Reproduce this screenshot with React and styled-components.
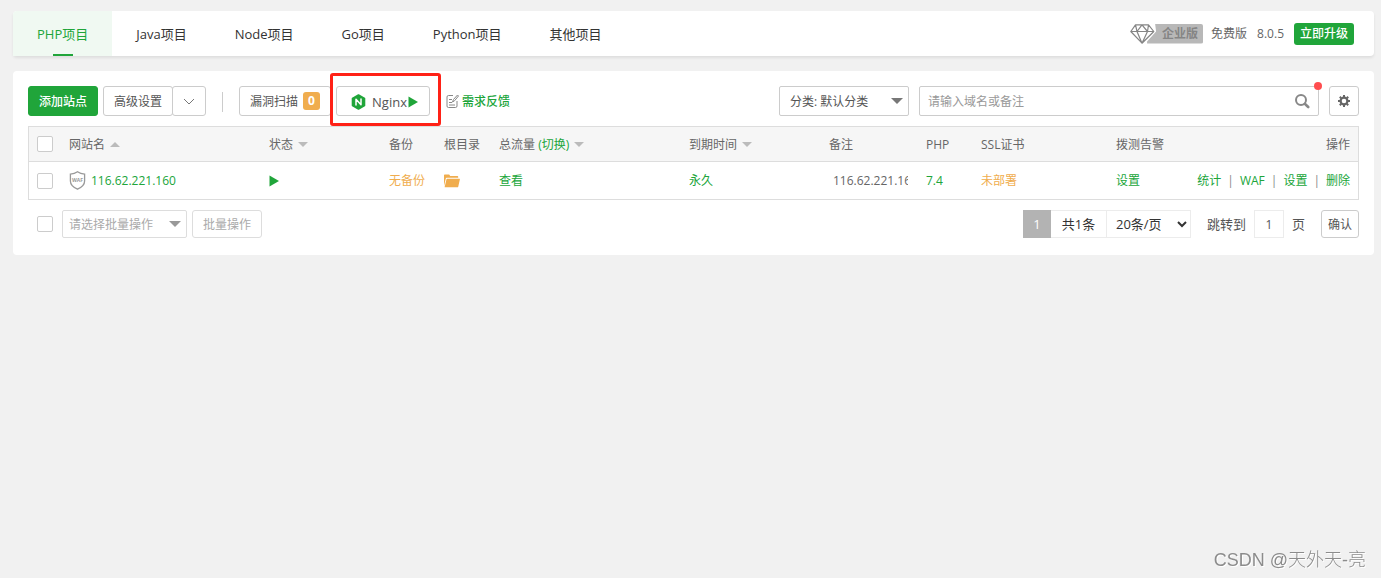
import React from "react";
import styled, { createGlobalStyle, css } from "styled-components";

const GREEN = "#20a53a";
const ORANGE = "#f0ad4e";

const GlobalStyle = createGlobalStyle`
  * {
    box-sizing: border-box;
  }

  body {
    margin: 0;
    background: #f1f1f1;
    color: #666;
    font-family: "Open Sans", "Noto Sans CJK SC", sans-serif;
    font-size: 12px;
    line-height: 19px;
  }

  button,
  input,
  select {
    font: inherit;
  }

  a {
    color: ${GREEN};
    text-decoration: none;
  }
`;

const tabs = [
  { name: "PHP项目", active: true },
  { name: "Java项目" },
  { name: "Node项目" },
  { name: "Go项目" },
  { name: "Python项目" },
  { name: "其他项目" }
];

const columns = [
  { name: "网站名", width: 200, sort: "up" },
  { name: "状态", width: 120, sort: "down" },
  { name: "备份", width: 55 },
  { name: "根目录", width: 55 },
  { name: "总流量", width: 190, sort: "down", toggle: "切换" },
  { name: "到期时间", width: 140, sort: "down" },
  { name: "备注", width: 97 },
  { name: "PHP", width: 55 },
  { name: "SSL证书", width: 135 },
  { name: "拨测告警", width: 80 }
];

const sites = [
  {
    name: "116.62.221.160",
    backup: "无备份",
    expire: "永久",
    remark: "116.62.221.160",
    php: "7.4",
    ssl: "未部署"
  }
];

const actions = ["统计", "WAF", "设置", "删除"];

const Page = styled.div`
  padding: 11px 7px 0 13px;
`;

const Header = styled.header`
  display: flex;
  align-items: center;
  justify-content: space-between;
  height: 45px;
  padding-right: 20px;
  margin-bottom: 15px;
  background: #fff;
  border-radius: 4px;
  box-shadow: 0 2px 3px rgba(0, 0, 0, 0.08);
`;

const Tabs = styled.nav`
  display: flex;
  height: 100%;
`;

const Tab = styled.a`
  position: relative;
  padding: 0 24px;
  border-radius: 4px 0 0 0;
  color: #333;
  font-size: 13px;
  line-height: 46px;

  ${props =>
    props.$active &&
    css`
      background: #f0f9f2;
      color: ${GREEN};

      &::after {
        content: "";
        position: absolute;
        left: 50%;
        bottom: 0;
        width: 20px;
        height: 2px;
        margin-left: -10px;
        background: ${GREEN};
      }
    `};
`;

const Version = styled.div`
  display: flex;
  align-items: center;
  gap: 10px;
`;

const Edition = styled.div`
  display: flex;
  align-items: center;
  margin-right: -2px;
`;

const EditionName = styled.span`
  height: 20px;
  margin-left: -8px;
  padding: 0 5px 0 15px;
  border-radius: 0 2px 2px 0;
  background: #b8b8b8;
  clip-path: polygon(8px 0, 100% 0, 100% 100%, 0 100%, 0 90%, 9px 8px);
  color: #858585;
  font-weight: 700;
  line-height: 20px;
`;

const UpgradeButton = styled.button`
  width: 60px;
  height: 22px;
  padding: 0;
  border: 0;
  border-radius: 3px;
  background: ${GREEN};
  color: #fff;
  font-weight: 500;
`;

const Panel = styled.main`
  padding: 15px 15px 17px;
  background: #fff;
  border-radius: 4px;
`;

const Bar = styled.div`
  display: flex;
  align-items: center;
  justify-content: space-between;
`;

const Group = styled.div`
  display: flex;
  align-items: center;
  gap: ${props => props.$gap || 5}px;
`;

const BatchGroup = styled(Group)`
  padding-left: 9px;
`;

const Button = styled.button`
  display: flex;
  align-items: center;
  justify-content: center;
  width: ${props => props.$width}px;
  height: ${props => props.$height || 30}px;
  padding: 0;
  border: 1px solid ${props => (props.$muted ? "#ddd" : "#ccc")};
  border-radius: 3px;
  background: #fff;
  color: ${props => (props.$muted ? "#aaa" : "#555")};
`;

const PrimaryButton = styled(Button)`
  border-color: ${GREEN};
  background: ${GREEN};
  color: #fff;
  font-weight: 500;
`;

const Split = styled.div`
  display: flex;

  button + button {
    margin-left: -1px;
  }
`;

const Divider = styled.span`
  width: 1px;
  height: 20px;
  margin: 2px 11px 0;
  background: #ccc;
`;

const Count = styled.span`
  width: 17px;
  height: 18px;
  margin-left: 5px;
  border-radius: 3px;
  background: ${ORANGE};
  color: #fff;
  font-weight: 700;
  line-height: 18px;
  text-align: center;
`;

const ServerButton = styled(Button)`
  gap: 6px;
  padding: 2px 0 0 3px;
  font-size: 13px;

  span {
    display: flex;
    align-items: center;
    gap: 1px;
  }
`;

const Marked = styled.div`
  position: relative;

  &::after {
    content: "";
    position: absolute;
    inset: -13px -11px -10px -6px;
    border: 3px solid #ff2116;
    border-radius: 3px;
    pointer-events: none;
  }
`;

const Feedback = styled.a`
  display: flex;
  align-items: center;
  gap: 3px;
  margin-left: 11px;
  font-weight: 500;
`;

const SelectBox = styled.div`
  display: grid;
  align-items: center;
  width: ${props => props.$width}px;

  > * {
    grid-area: 1 / 1;
  }

  svg {
    justify-self: end;
    margin-right: 6px;
    pointer-events: none;
  }
`;

const Select = styled.select`
  appearance: none;
  width: 100%;
  height: ${props => props.$height}px;
  padding: 0 ${props => props.$pad}px;
  border: 1px solid ${props => (props.$muted ? "#ddd" : "#ccc")};
  border-radius: 2px;
  background: #fff;
  color: ${props => (props.$muted ? "#aaa" : "#555")};
`;

const Search = styled.form`
  position: relative;
  display: flex;
  align-items: center;
  width: 400px;
  height: 30px;
  padding: 0 8px;
  border: 1px solid #ccc;
  border-radius: 2px;

  input {
    flex: 1;
    min-width: 0;
    padding: 0;
    border: 0;
    outline: 0;
  }

  input::placeholder {
    color: #999;
  }

  button {
    display: flex;
    padding: 0;
    border: 0;
    background: none;
  }
`;

const Dot = styled.span`
  position: absolute;
  top: -5px;
  right: -4px;
  width: 8px;
  height: 8px;
  border-radius: 50%;
  background: #ff4d4f;
`;

const Table = styled.table`
  width: 100%;
  margin: 10px 0;
  border: 1px solid #ddd;
  border-spacing: 0;
  table-layout: fixed;

  th,
  td {
    padding: 0 8px;
    font-weight: 400;
    text-align: left;
    white-space: nowrap;
  }

  th {
    height: 35px;
    border-bottom: 1px solid #ddd;
    background: #f6f6f6;
  }

  td {
    height: 37px;
  }

  th:last-child,
  td:last-child {
    text-align: right;
  }
`;

const Checkbox = styled.input`
  appearance: none;
  display: block;
  width: 16px;
  height: 16px;
  margin: 0;
  border: 1px solid #ccc;
  border-radius: 2px;
  background: #fff;
`;

const Inline = styled.div`
  display: flex;
  align-items: center;
  gap: 5px;
`;

const Orange = styled.a`
  color: ${ORANGE};
`;

const Remark = styled.div`
  margin: 0 2px 0 4px;
  overflow: hidden;
`;

const Separator = styled.span`
  margin: 0 6px;
  color: #888;
`;

const Pager = styled.div`
  display: flex;
  align-items: center;
  color: #333;
  font-size: 13px;
`;

const PageNow = styled.span`
  width: 28px;
  background: #b3b3b3;
  color: #fff;
  line-height: 28px;
  text-align: center;
`;

const PageTotal = styled.span`
  width: 55px;
  border: solid #ececec;
  border-width: 1px 0;
  line-height: 26px;
  text-align: center;
`;

const PageSize = styled.select`
  width: 85px;
  height: 28px;
  padding: 0 2px 0 5px;
  border: 1px solid #ececec;
  border-radius: 0;
  background: #fff;
  color: #333;
`;

const Jump = styled.label`
  display: flex;
  align-items: center;
  gap: 8px;
  margin: 0 16px;
  color: #555;
`;

const PageInput = styled.input`
  width: 30px;
  height: 28px;
  padding: 0;
  border: 1px solid #ececec;
  color: #555;
  font-size: 12px;
  text-align: center;
`;

const ConfirmButton = styled(Button)`
  font-size: 12px;
`;

const Watermark = styled.div`
  position: fixed;
  right: 15px;
  bottom: 6px;
  color: #8c8c8c;
  font-family: "Liberation Sans", "Noto Sans CJK SC", sans-serif;
  font-size: 18px;
  font-weight: 300;
  line-height: 24px;
  text-shadow: 1px 1px 0 #fff;
`;

const Caret = ({ up, color = "#bbb", width = 10, height = 5 }) => (
  <svg width={width} height={height} viewBox="0 0 10 5" preserveAspectRatio="none">
    <path d={up ? "M0 5L5 0l5 5z" : "M0 0h10L5 5z"} fill={color} />
  </svg>
);

const Play = () => (
  <svg width="10" height="12" viewBox="0 0 10 12">
    <path d="M0.5 0.5L10 6L0.5 11.5z" fill={GREEN} />
  </svg>
);

const Diamond = () => (
  <svg width="25" height="20" viewBox="0 0 25 20" fill="none" stroke="#858585" strokeWidth="1.2" strokeLinejoin="round">
    <path d="M5.5 0.8h13L23.8 7.5 12 19.2 0.8 7.5zM0.8 7.5h23M5.5 0.8L7 7.5l5 11.7 5.5-11.7 1-6.7M7 7.5l5-6.7 5.5 6.7" />
  </svg>
);

const NginxLogo = () => (
  <svg width="15" height="16" viewBox="0 0 15 16">
    <path
      d="M7.5 1l6 3.5v7l-6 3.5-6-3.5v-7z"
      fill={GREEN}
      stroke={GREEN}
      strokeWidth="1.6"
      strokeLinejoin="round"
    />
    <path
      d="M5 11V5.2L10 10.8V5"
      fill="none"
      stroke="#fff"
      strokeWidth="1.5"
      strokeLinecap="round"
      strokeLinejoin="round"
    />
  </svg>
);

const NoteIcon = () => (
  <svg width="13" height="14" viewBox="0 0 13 14" fill="none" stroke="#888">
    <path d="M7 1.5H2.5Q1 1.5 1 3v9q0 1.5 1.5 1.5h7Q11 13.5 11 12V7M3 5.5h3M3 8.5h3M3 11h6M6.5 8l1-2.5 4-4.5 1 1-4 4.8z" />
  </svg>
);

const SearchIcon = () => (
  <svg width="16" height="16" viewBox="0 0 16 16" fill="none" stroke="#888">
    <circle cx="7" cy="7" r="5" strokeWidth="2" />
    <path d="M10.8 10.8l3.4 3.2" strokeWidth="2.6" strokeLinecap="round" />
  </svg>
);

const GearIcon = () => (
  <svg width="14" height="14" viewBox="0 0 14 14" fill="none" stroke="#666">
    <circle cx="7" cy="7" r="3.4" strokeWidth="2.2" />
    <path
      d="M7 1v2M7 11v2M1 7h2M11 7h2M2.8 2.8l1.4 1.4M9.8 9.8l1.4 1.4M2.8 11.2l1.4-1.4M9.8 4.2l1.4-1.4"
      strokeWidth="2"
    />
  </svg>
);

const FolderIcon = () => (
  <svg width="16" height="14" viewBox="0 0 16 14" fill={ORANGE}>
    <path d="M0 12V1.2Q0 0.5 0.7 0.5h4.5L6.2 2h7.3q0.7 0 0.7 0.8v1H2.6Q2 3.8 1.8 4.5z" />
    <path d="M3 4.8h12.6q0.4 0 0.3 0.5L14.3 12.4Q14.1 13.3 13.3 13.3H1Q0.5 13.3 0.7 12.8L2.5 5.2Q2.6 4.8 3 4.8z" />
  </svg>
);

const Shield = () => (
  <svg width="17" height="19" viewBox="0 0 17 19">
    <path
      d="M8.5 0.8Q11.5 3 15.6 3.2V10q0 5-7.1 8.2Q1.4 15 1.4 10V3.2Q5.5 3 8.5 0.8z"
      fill="none"
      stroke="#999"
      strokeWidth="1.3"
    />
    <text x="8.5" y="11" fontSize="5" fontWeight="700" textAnchor="middle" fill="#999">
      WAF
    </text>
  </svg>
);

const ChevronDown = () => (
  <svg width="12" height="7" viewBox="0 0 12 7" fill="none" stroke="#777">
    <path d="M1 1l5 5 5-5" />
  </svg>
);

const SiteRow = ({ site }) => (
  <tr>
    <td>
      <Checkbox type="checkbox" aria-label={site.name} />
    </td>
    <td>
      <Inline>
        <Shield />
        <a href="#site">{site.name}</a>
      </Inline>
    </td>
    <td>
      <Inline>
        <Play />
      </Inline>
    </td>
    <td>
      <Orange href="#backup">{site.backup}</Orange>
    </td>
    <td>
      <Inline>
        <FolderIcon />
      </Inline>
    </td>
    <td>
      <a href="#flow">查看</a>
    </td>
    <td>
      <a href="#expire">{site.expire}</a>
    </td>
    <td>
      <Remark>{site.remark}</Remark>
    </td>
    <td>
      <a href="#php">{site.php}</a>
    </td>
    <td>
      <Orange href="#ssl">{site.ssl}</Orange>
    </td>
    <td>
      <a href="#alarm">设置</a>
    </td>
    <td>
      {actions.map((action, index) => (
        <React.Fragment key={action}>
          {index > 0 && <Separator>|</Separator>}
          <a href="#action">{action}</a>
        </React.Fragment>
      ))}
    </td>
  </tr>
);

export default () => (
  <>
    <GlobalStyle />
    <Page>
      <Header>
        <Tabs>
          {tabs.map(tab => (
            <Tab href="#tab" key={tab.name} $active={tab.active}>
              {tab.name}
            </Tab>
          ))}
        </Tabs>
        <Version>
          <Edition>
            <Diamond />
            <EditionName>企业版</EditionName>
          </Edition>
          <span>免费版</span>
          <span>8.0.5</span>
          <UpgradeButton>立即升级</UpgradeButton>
        </Version>
      </Header>
      <Panel>
        <Bar>
          <Group>
            <PrimaryButton $width={70}>添加站点</PrimaryButton>
            <Split>
              <Button $width={70}>高级设置</Button>
              <Button $width={34} aria-label="更多">
                <ChevronDown />
              </Button>
            </Split>
            <Divider />
            <Button $width={92}>
              漏洞扫描
              <Count>0</Count>
            </Button>
            <Marked>
              <ServerButton $width={94}>
                <NginxLogo />
                <span>
                  Nginx
                  <Play />
                </span>
              </ServerButton>
            </Marked>
            <Feedback href="#feedback">
              <NoteIcon />
              需求反馈
            </Feedback>
          </Group>
          <Group $gap={10}>
            <SelectBox $width={130}>
              <Select $height={30} $pad={10} aria-label="分类">
                <option>分类: 默认分类</option>
              </Select>
              <Caret color="#777" width={12} height={6} />
            </SelectBox>
            <Search>
              <input type="text" placeholder="请输入域名或备注" aria-label="搜索" />
              <button type="button" aria-label="搜索">
                <SearchIcon />
              </button>
              <Dot />
            </Search>
            <Button $width={30} aria-label="设置">
              <GearIcon />
            </Button>
          </Group>
        </Bar>
        <Table>
          <colgroup>
            <col width="32" />
            {columns.map(column => (
              <col key={column.name} width={column.width} />
            ))}
            <col />
          </colgroup>
          <thead>
            <tr>
              <th>
                <Checkbox type="checkbox" aria-label="全选" />
              </th>
              {columns.map(column => (
                <th key={column.name}>
                  <Inline>
                    <span>
                      {column.name}
                      {column.toggle && <a href="#toggle"> ({column.toggle})</a>}
                    </span>
                    {column.sort && <Caret up={column.sort === "up"} />}
                  </Inline>
                </th>
              ))}
              <th>操作</th>
            </tr>
          </thead>
          <tbody>
            {sites.map(site => (
              <SiteRow site={site} key={site.name} />
            ))}
          </tbody>
        </Table>
        <Bar>
          <BatchGroup>
            <Group $gap={9}>
              <Checkbox type="checkbox" aria-label="批量选择" />
              <SelectBox $width={125}>
                <Select $height={28} $pad={6} $muted aria-label="批量操作">
                  <option>请选择批量操作</option>
                </Select>
                <Caret color="#999" width={12} height={6} />
              </SelectBox>
            </Group>
            <Button $width={70} $height={28} $muted>
              批量操作
            </Button>
          </BatchGroup>
          <Pager>
            <PageNow>1</PageNow>
            <PageTotal>共1条</PageTotal>
            <PageSize aria-label="每页条数">
              <option>20条/页</option>
            </PageSize>
            <Jump>
              跳转到
              <PageInput type="text" defaultValue="1" />
              页
            </Jump>
            <ConfirmButton $width={38} $height={28}>
              确认
            </ConfirmButton>
          </Pager>
        </Bar>
      </Panel>
    </Page>
    <Watermark>CSDN @天外天-亮</Watermark>
  </>
);
